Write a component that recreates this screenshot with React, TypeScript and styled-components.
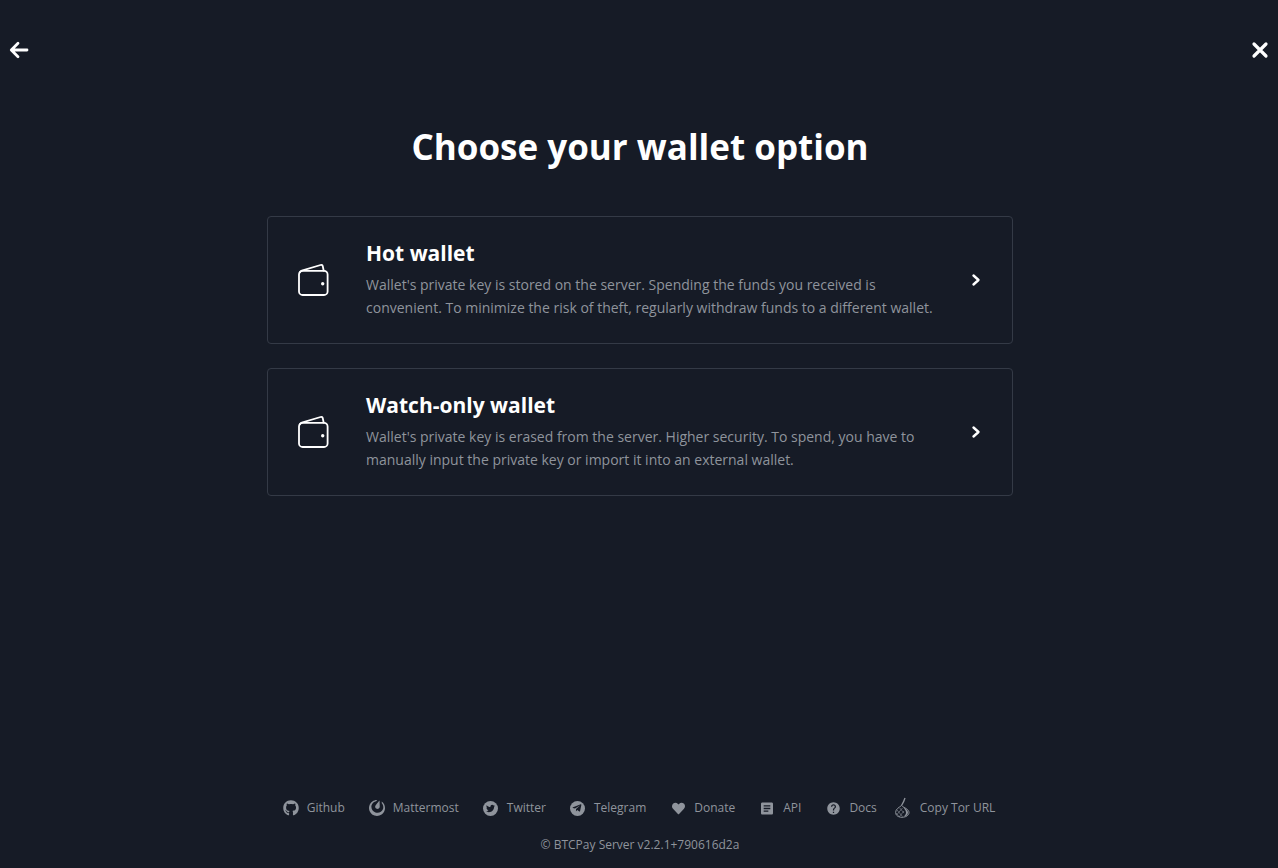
import { ReactNode } from "react";
import styled, { createGlobalStyle } from "styled-components";
import { FaGithub, FaHeart, FaTelegramPlane, FaTwitter } from "react-icons/fa";
import { SiMattermost } from "react-icons/si";
import { MdArticle, MdHelp } from "react-icons/md";

const GlobalStyle = createGlobalStyle`
  html, body {
    margin: 0;
    padding: 0;
    background: #161b26;
  }
  * {
    box-sizing: border-box;
  }
`;

const WalletIcon = () => (
  <svg width="32" height="32" viewBox="0 0 32 32" fill="none" stroke="#fff" strokeWidth="1.800" strokeLinecap="round" strokeLinejoin="round">
    <rect x="1" y="6.800" width="28.600" height="24.200" rx="3.600" />
    <path d="M1.800 8.600c.3-1 1-1.700 2-2L22.600 1c1.200-.3 2 .2 2.200 1.300l.9 4.400" />
    <circle cx="24.700" cy="19.700" r="1.700" fill="#fff" stroke="none" />
  </svg>
);

const TwitterCircle = () => (
  <TwitterBadge>
    <FaTwitter size={9} color="#161b26" />
  </TwitterBadge>
);

const TelegramCircle = () => (
  <TelegramBadge>
    <FaTelegramPlane size={10} color="#161b26" />
  </TelegramBadge>
);

const TorIcon = () => (
  <svg width="16" height="22" viewBox="0 0 16 22" fill="none" stroke="#8f949c" strokeWidth="1">
    <path d="M10 1C9.300 3.500 8 6 6.500 8.500" strokeWidth="1.300" />
    <path d="M6.500 8.500C4 10.500.6 12 .6 15.500c0 3 2.800 4.800 6.400 4.800s7-1.800 7-4.800C14 12 9 11 6.500 8.500Z" />
    <path d="M8 10c2 1.500 5 2.800 5 5.500 0 2.500-2 4-4.500 4.200 1.500-1 2.500-2.500 2.500-4.200 0-2-1.800-3.800-3-5.500Z" fill="#8f949c" stroke="none" />
    <path d="M2 13l5.500 6.500M1 16l3.500 4M4.500 10.800l4.500 5.200M1.500 18l6-7M4 20l5-6" strokeWidth=".6" />
  </svg>
);

const options = [
  {
    title: "Hot wallet",
    description:
      "Wallet's private key is stored on the server. Spending the funds you received is convenient. To minimize the risk of theft, regularly withdraw funds to a different wallet.",
  },
  {
    title: "Watch-only wallet",
    description:
      "Wallet's private key is erased from the server. Higher security. To spend, you have to manually input the private key or import it into an external wallet.",
  },
];

const links: { label: string; icon: ReactNode; tor?: boolean }[] = [
  { label: "Github", icon: <FaGithub size={16} /> },
  { label: "Mattermost", icon: <SiMattermost size={16} /> },
  { label: "Twitter", icon: <TwitterCircle /> },
  { label: "Telegram", icon: <TelegramCircle /> },
  { label: "Donate", icon: <FaHeart size={13} /> },
  { label: "API", icon: <MdArticle size={17} /> },
  { label: "Docs", icon: <MdHelp size={15} /> },
  { label: "Copy Tor URL", icon: <TorIcon />, tor: true },
];

export default function App() {
  return (
    <Page>
      <GlobalStyle />
      <Header>
        <IconButton aria-label="Back">
          <svg width="20" height="20" viewBox="0 0 20 20" fill="none" stroke="#fff" strokeWidth="2.800" strokeLinecap="round" strokeLinejoin="round">
            <path d="M18 10H2.500M9 3.300 2.300 10 9 16.700" />
          </svg>
        </IconButton>
        <IconButton aria-label="Close">
          <svg width="20" height="20" viewBox="0 0 20 20" fill="none" stroke="#fff" strokeWidth="3.200" strokeLinecap="round">
            <path d="M4 4l12 12M16 4 4 16" />
          </svg>
        </IconButton>
      </Header>
      <Main>
        <Title>Choose your wallet option</Title>
        <OptionList>
          {options.map((item) => (
            <OptionCard key={item.title}>
              <WalletSlot>
                <WalletIcon />
              </WalletSlot>
              <OptionBody>
                <OptionTitle>{item.title}</OptionTitle>
                <OptionText>{item.description}</OptionText>
              </OptionBody>
              <Chevron width="12" height="14" viewBox="0 0 12 14" fill="none" stroke="#fff" strokeWidth="2.400" strokeLinecap="round" strokeLinejoin="round">
                <path d="M3.500 2.500 8.500 7l-5 4.500" />
              </Chevron>
            </OptionCard>
          ))}
        </OptionList>
      </Main>
      <Footer>
        <FooterLinks>
          {links.map((link) => (
            <FooterLink key={link.label} $tor={link.tor}>
              <LinkIcon $tor={link.tor}>{link.icon}</LinkIcon>
              {link.label}
            </FooterLink>
          ))}
        </FooterLinks>
        <Copyright>© BTCPay Server v2.2.1+790616d2a</Copyright>
      </Footer>
    </Page>
  );
}

const Page = styled.div`
  display: flex;
  flex-direction: column;
  height: 868px;
  overflow: hidden;
  background: #161b26;
  font-family: "Open Sans", sans-serif;
  color: #fff;
`;

const Header = styled.header`
  display: flex;
  justify-content: space-between;
  padding: 40px 8px 0 9px;
`;

const IconButton = styled.button`
  display: flex;
  width: 20px;
  height: 20px;
  padding: 0;
  background: none;
  border: 0;
  cursor: pointer;
`;

const Main = styled.main`
  flex: 1;
  display: flex;
  flex-direction: column;
  align-items: center;
  padding: 62px 0 0 2px;
`;

const Title = styled.h1`
  margin: 0 0 44px;
  font-size: 35px;
  line-height: 50px;
  font-weight: 700;
  color: #fff;
`;

const OptionList = styled.div`
  display: flex;
  flex-direction: column;
  gap: 24px;
  width: 746px;
`;

const OptionCard = styled.a`
  display: flex;
  align-items: center;
  height: 128px;
  padding: 0 30px 0 30px;
  border: 1px solid #343a46;
  border-radius: 4px;
  cursor: pointer;
`;

const WalletSlot = styled.div`
  display: flex;
  flex: none;
  width: 68px;
`;

const OptionBody = styled.div`
  flex: 1;
  min-width: 0;
`;

const OptionTitle = styled.h4`
  margin: 0;
  font-size: 21px;
  line-height: 24px;
  font-weight: 700;
  color: #fff;
`;

const OptionText = styled.p`
  margin: 8px 0 0;
  width: 575px;
  font-size: 14px;
  line-height: 23px;
  color: #8f949c;
`;

const Chevron = styled.svg`
  flex: none;
`;

const Footer = styled.footer`
  display: flex;
  flex-direction: column;
  align-items: center;
  padding: 0 0 15px 2px;
`;

const FooterLinks = styled.nav`
  display: flex;
  align-items: center;
  gap: 24px;
  height: 24px;
  margin-left: -2px;
`;

const FooterLink = styled.a<{ $tor?: boolean }>`
  display: flex;
  align-items: center;
  gap: 8px;
  margin-left: ${(p) => (p.$tor ? "-7px" : "0")};
  font-size: 12px;
  line-height: 16px;
  color: #8f949c;
  cursor: pointer;
`;

const LinkIcon = styled.span<{ $tor?: boolean }>`
  display: flex;
  align-items: center;
  justify-content: center;
  width: ${(p) => (p.$tor ? "18px" : "16px")};
  height: 16px;
`;

const TwitterBadge = styled.span`
  display: flex;
  align-items: center;
  justify-content: center;
  width: 15px;
  height: 15px;
  border-radius: 50%;
  background: #8f949c;
`;

const TelegramBadge = styled(TwitterBadge)`
  padding-right: 1px;
`;

const Copyright = styled.div`
  margin-top: 17px;
  font-size: 12px;
  line-height: 16px;
  color: #8f949c;
`;
